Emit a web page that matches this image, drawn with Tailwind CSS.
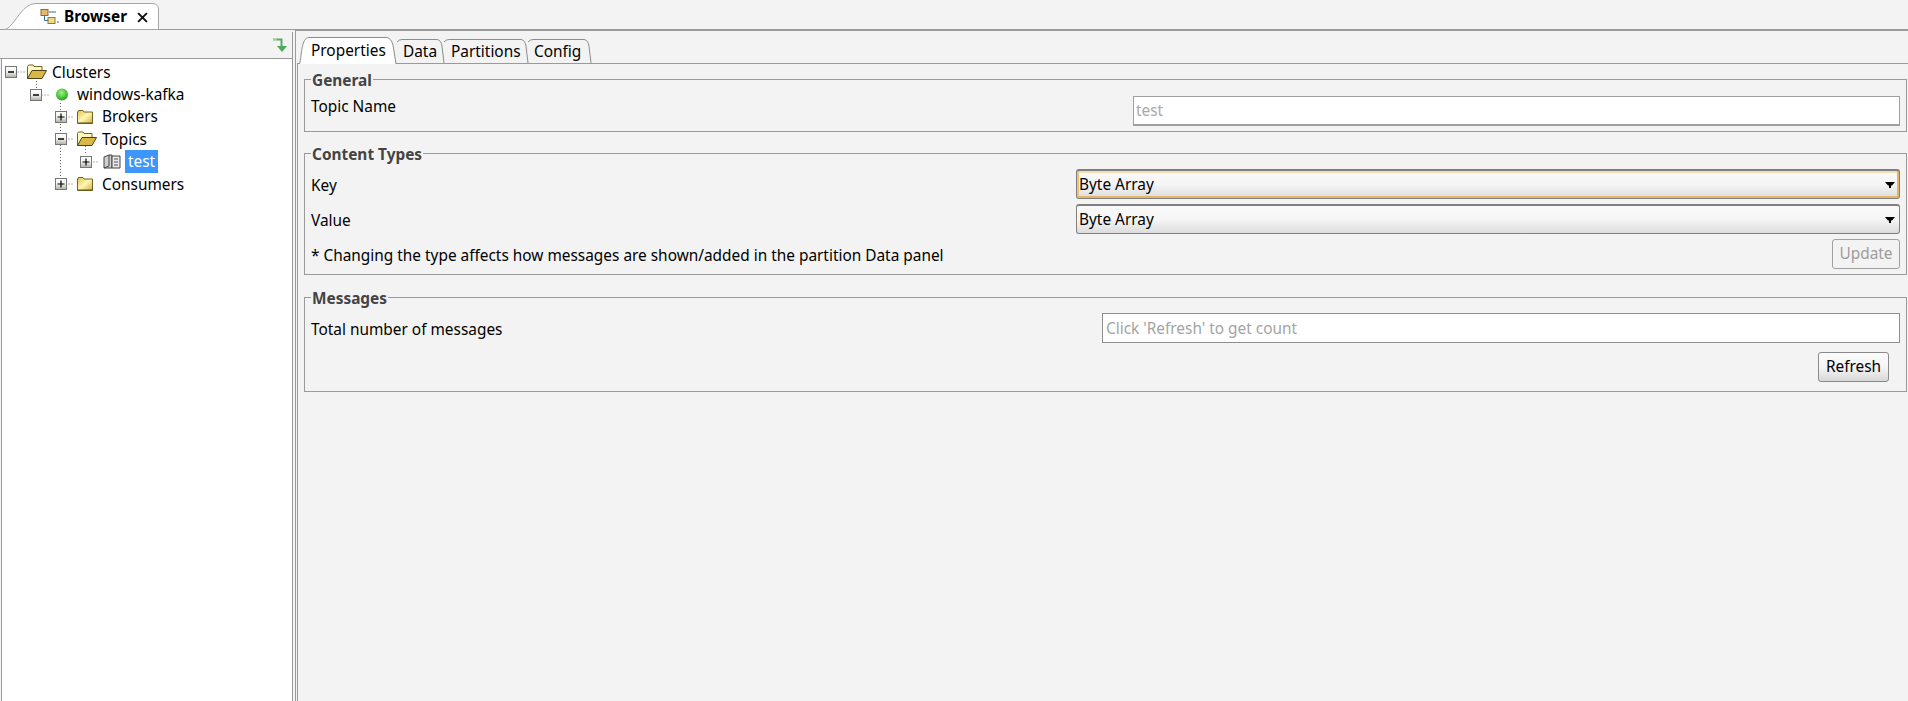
<!DOCTYPE html>
<html lang="en">
<head>
    <meta charset="UTF-8">
    <title>Browser</title>
    <script src="https://cdn.jsdelivr.net/npm/@tailwindcss/browser@4"></script>
</head>
<body class="w-[1908px] h-[701px] overflow-hidden bg-[#f3f3f3] text-[15.4px] text-black font-['Noto_Sans',sans-serif]">
    <svg class="absolute w-0 h-0">
        <defs>
            <linearGradient id="box" x1="0" y1="0" x2="0" y2="1"><stop offset="0" stop-color="#fff"/><stop offset="0.5" stop-color="#f0f0ec"/><stop offset="1" stop-color="#aeaca4"/></linearGradient>
            <linearGradient id="fold" x1="0" y1="0" x2="1" y2="1"><stop offset="0" stop-color="#e0c050"/><stop offset="0.5" stop-color="#fff6b4"/><stop offset="1" stop-color="#d0b038"/></linearGradient>
            <radialGradient id="ball" cx="0.45" cy="0.35" r="0.65"><stop offset="0" stop-color="#a4f08e"/><stop offset="0.6" stop-color="#4fc93c"/><stop offset="1" stop-color="#2b9a25"/></radialGradient>
        </defs>
        <symbol id="minus" viewBox="0 0 12 12"><rect x="0.500" y="0.500" width="11" height="11" fill="url(#box)" stroke="#777"/><path d="M3 6h6" stroke="#000" stroke-width="1.500"/></symbol>
        <symbol id="plus" viewBox="0 0 12 12"><rect x="0.500" y="0.500" width="11" height="11" fill="url(#box)" stroke="#777"/><path d="M2.500 6h7M6 2.500v7" stroke="#000" stroke-width="1.200"/></symbol>
        <symbol id="folder" viewBox="0 0 16 16"><path d="M0.500 14.500V3L1.500 1.500H6L7 3H15.500V14.500Z" fill="url(#fold)" stroke="#6e6426"/><path d="M1 14H15.500" stroke="#5c5420"/></symbol>
        <symbol id="folder-open" viewBox="0 0 20 16"><path d="M0.500 14.500V2.500L1.500 1H6L7 2.500H15V6" fill="#fff6c0" stroke="#6e6426"/><path d="M0.500 14.500L5 6.500H19.500L15 14.500Z" fill="#d9b848" stroke="#4c4418"/></symbol>
    </svg>

    <!-- editor tab -->
    <div class="relative h-[30px] border-b border-[#9a9a9a]">
        <svg class="absolute left-0 top-0" width="162" height="30"><path d="M4 29.500C14 29 20 4 36 3.500H152Q158 3.500 158.500 9V29.500Z" fill="#fff" stroke="#a6a6a6"/></svg>
        <div class="absolute left-[40px] top-[7px] flex items-center h-[20px]">
            <svg width="20" height="18" viewBox="0 0 20 18">
                <rect x="1" y="1.500" width="7" height="6" fill="#e6b872" stroke="#8c6a3c"/>
                <rect x="8" y="9.500" width="7" height="6" fill="#f3d98c" stroke="#8c7a3c"/>
                <path d="M4.500 8v4.500H8M9 4h7M17 14h2" stroke="#2a6f9e" fill="none"/>
            </svg>
            <span class="ml-[4px] font-bold">Browser</span>
            <svg class="ml-[10px]" width="11" height="11" viewBox="0 0 10 10"><path d="M1 1L9 9M9 1L1 9" stroke="#111" stroke-width="1.800"/></svg>
        </div>
    </div>

    <div class="flex h-[671px]">
        <!-- tree side -->
        <div class="w-[293px] mt-[2px] border-r border-[#9a9a9a]">
            <div class="h-[27px] flex justify-end items-center pr-[4px] border-b border-[#9a9a9a]">
                <svg width="16" height="16" viewBox="0 0 16 16"><path d="M1 2.500H5" stroke="#8fd494" stroke-width="2.500"/><path d="M5 2.500H9.500V9" stroke="#5aa863" stroke-width="2" fill="none"/><path d="M5 9H15L10 15Z" fill="#4caa5a"/></svg>
            </div>
            <div class="relative h-[642px] ml-[1px] bg-white border-l border-[#9a9a9a] pt-[2px]">
                <!-- dotted connectors -->
                <svg class="absolute left-0 top-0" width="120" height="200">
                    <path d="M15.500 13H24M34.500 22V30M39.500 36H48M58.500 44V125M63.500 58H72M63.500 80H72M63.500 125H72M83.500 87V96M88.500 103H96" stroke="#666" stroke-dasharray="1 2" fill="none"/>
                </svg>
                <div class="relative h-[22.4px] flex items-center pl-[3px]"><svg class="w-[12px] h-[12px]"><use href="#minus"/></svg><svg class="ml-[10px] w-[20px] h-[16px]"><use href="#folder-open"/></svg><span class="ml-[5px]">Clusters</span></div>
                <div class="relative h-[22.4px] flex items-center pl-[28px]"><svg class="w-[12px] h-[12px]"><use href="#minus"/></svg>
                    <svg class="ml-[14px]" width="12" height="13" viewBox="0 0 12 13"><circle cx="6" cy="6.500" r="6" fill="url(#ball)"/></svg>
                    <span class="ml-[9px]">windows-kafka</span></div>
                <div class="relative h-[22.4px] flex items-center pl-[53px]"><svg class="w-[12px] h-[12px]"><use href="#plus"/></svg><svg class="ml-[10px] w-[16px] h-[16px]"><use href="#folder"/></svg><span class="ml-[9px]">Brokers</span></div>
                <div class="relative h-[22.4px] flex items-center pl-[53px]"><svg class="w-[12px] h-[12px]"><use href="#minus"/></svg><svg class="ml-[10px] w-[20px] h-[16px]"><use href="#folder-open"/></svg><span class="ml-[5px]">Topics</span></div>
                <div class="relative h-[22.4px] flex items-center pl-[78px]"><svg class="w-[12px] h-[12px]"><use href="#plus"/></svg>
                    <svg class="ml-[11px]" width="18" height="16" viewBox="0 0 18 16"><path d="M1 14V3L6 1V12ZM6 1H9V14H1" fill="#cfcfcf" stroke="#444"/><path d="M9 2H17V14H9Z" fill="#e8e8e8" stroke="#444"/><path d="M11 5H15M11 8H15M11 11H15" stroke="#555"/></svg>
                    <span class="ml-[4px] px-[3px] h-[23px] leading-[23px] bg-[#3d96fb] text-white">test</span></div>
                <div class="relative h-[22.4px] flex items-center pl-[53px]"><svg class="w-[12px] h-[12px]"><use href="#plus"/></svg><svg class="ml-[10px] w-[16px] h-[16px]"><use href="#folder"/></svg><span class="ml-[9px]">Consumers</span></div>
            </div>
        </div>

        <!-- properties side -->
        <div class="flex-1 ml-[2px] border-l border-t border-[#9a9a9a]">
            <div class="relative flex h-[32px] pl-[3px] pt-[6px]">
                <div class="relative w-[98px] h-[27px] z-10">
                    <svg class="absolute left-0 top-0" width="100" height="27"><path d="M0.500 27C3 18 2 1 10 0.500H88Q92 1 94 8L97 27" fill="#fff" stroke="#8c8c8c"/></svg>
                    <span class="absolute left-[12px] top-[2px]">Properties</span>
                </div>
                <div class="relative w-[47px] h-[24px] mt-[2px]">
                    <svg class="absolute left-0 top-0" width="50" height="24"><path d="M0 3Q2 0.500 5 0.500H40Q44 1 45 7L47 24" fill="#f3f3f3" stroke="#8c8c8c"/></svg>
                    <span class="absolute left-[6px] top-[1px]">Data</span>
                </div>
                <div class="relative w-[84px] h-[24px] mt-[2px]">
                    <svg class="absolute left-0 top-0" width="88" height="24"><path d="M0 3Q2 0.500 5 0.500H77Q81 1 82 7L84 24" fill="#f3f3f3" stroke="#8c8c8c"/></svg>
                    <span class="absolute left-[7px] top-[1px]">Partitions</span>
                </div>
                <div class="relative w-[63px] h-[24px] mt-[2px]">
                    <svg class="absolute left-0 top-0" width="66" height="24"><path d="M0 3Q2 0.500 5 0.500H56Q60 1 61 7L63 24" fill="#f3f3f3" stroke="#8c8c8c"/></svg>
                    <span class="absolute left-[6px] top-[1px]">Config</span>
                </div>
            </div>

            <div class="h-[639px] ml-[1px] border-l border-t border-[#9a9a9a] pl-[6px] pr-[1px] pt-[5px]">
                <fieldset class="h-[63px] border border-[#9a9a9a] px-[6px]">
                    <legend class="px-[1px] h-[20px] leading-[24px] font-bold text-[#444]">General</legend>
                    <div class="flex mt-[7px]">
                        <span class="leading-[20px] pt-[1px]">Topic Name</span>
                        <input class="ml-auto w-[767px] h-[30px] px-[2px] border border-b-2 border-[#a0a0a0] bg-white text-[#a9a9a9] outline-none" value="test" disabled>
                    </div>
                </fieldset>

                <fieldset class="mt-[11px] h-[132px] border border-[#9a9a9a] px-[6px]">
                    <legend class="px-[1px] h-[20px] leading-[24px] font-bold text-[#444]">Content Types</legend>
                    <div class="flex items-center h-[35px] mt-[3px]">
                        <span class="pt-[4px]">Key</span>
                        <div class="ml-auto w-[824px] h-[30px] flex items-center justify-between pl-[2px] pr-[4px] pt-[2px] rounded-[3px] border border-t-2 border-[#808080] shadow-[inset_2px_0_0_#ecc27c,inset_0_-2px_0_#e3b666,inset_-2px_0_0_#e3b666,inset_0_2px_0_#f6dfb0] bg-gradient-to-b from-[#f9f9f9] via-[#f5f5f5] to-[#dcdcdc]">
                            <span>Byte Array</span>
                            <svg width="10" height="6" viewBox="0 0 10 6"><path d="M0 0H10L7 3.500H6V6H4V3.500H3Z" fill="#000"/></svg>
                        </div>
                    </div>
                    <div class="flex items-center h-[35px]">
                        <span class="pt-[4px]">Value</span>
                        <div class="ml-auto w-[824px] h-[30px] flex items-center justify-between pl-[2px] pr-[4px] pt-[2px] rounded-[3px] border border-[#808080] border-t-2 bg-gradient-to-b from-[#f9f9f9] via-[#f5f5f5] to-[#dcdcdc]">
                            <span>Byte Array</span>
                            <svg width="10" height="6" viewBox="0 0 10 6"><path d="M0 0H10L7 3.500H6V6H4V3.500H3Z" fill="#000"/></svg>
                        </div>
                    </div>
                    <div class="flex items-center justify-between mt-[3px]">
                        <span class="pt-[4px]">* Changing the type affects how messages are shown/added in the partition Data panel</span>
                        <button class="w-[68px] h-[30px] rounded-[3px] border border-[#a0a0a0] text-[#9c9c9c]">Update</button>
                    </div>
                </fieldset>

                <fieldset class="mt-[12px] h-[105px] border border-[#9a9a9a] px-[6px]">
                    <legend class="px-[1px] h-[20px] leading-[24px] font-bold text-[#444]">Messages</legend>
                    <div class="flex items-center h-[30px] mt-[6px]">
                        <span class="pt-[4px]">Total number of messages</span>
                        <input class="ml-auto w-[798px] h-[30px] px-[3px] border border-[#8e8e8e] bg-white placeholder:text-[#a4a4a4] outline-none" placeholder="Click 'Refresh' to get count">
                    </div>
                    <div class="flex justify-end mt-[9px] pr-[11px]">
                        <button class="w-[71px] h-[30px] rounded-[3px] border border-[#8a8a8a] bg-gradient-to-b from-[#fbfbfb] via-[#f5f5f5] to-[#d8d8d8]">Refresh</button>
                    </div>
                </fieldset>
            </div>
        </div>
    </div>
</body>
</html>
